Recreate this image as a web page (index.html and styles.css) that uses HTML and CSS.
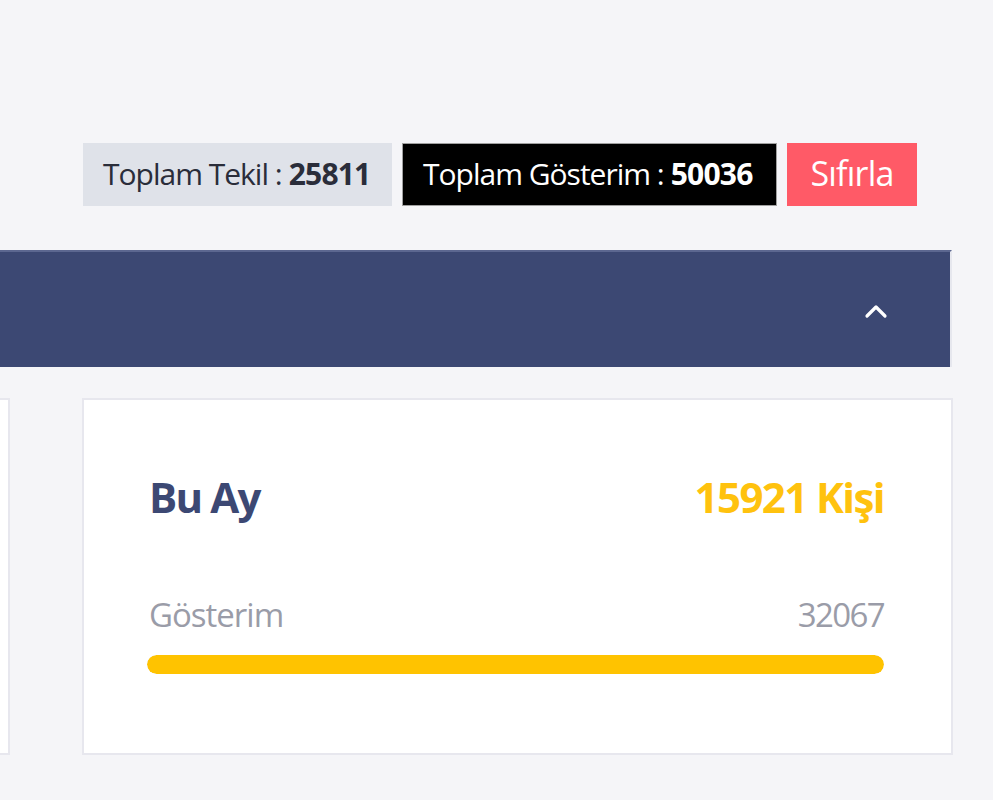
FILE: index.html
```html
<!DOCTYPE html>
<html lang="tr">
<head>
<meta charset="utf-8">
<title>İstatistik</title>
<link rel="stylesheet" href="styles.css">
</head>
<body>
<div class="page">
  <div class="badges">
    <div class="badge badge-light">Toplam Tekil : <b>25811</b></div>
    <div class="badge badge-dark">Toplam Gösterim : <b>50036</b></div>
    <div class="badge badge-reset">Sıfırla</div>
  </div>
  <div class="panel-bar">
    <svg class="chevron" width="24" height="16" viewBox="0 0 24 16"><path d="M3 13 L12 4 L21 13" fill="none" stroke="#fff" stroke-width="3.2" stroke-linecap="round" stroke-linejoin="round"/></svg>
  </div>
  <div class="cards">
    <div class="card card-edge"></div>
    <div class="card card-main">
      <div class="card-head">
        <span class="card-title">Bu Ay</span>
        <span class="card-count">15921 Kişi</span>
      </div>
      <div class="card-row">
        <span class="row-label">Gösterim</span>
        <span class="row-value">32067</span>
      </div>
      <div class="progress"><div class="progress-fill" style="width:100%"></div></div>
    </div>
  </div>
</div>
</body>
</html>
```

FILE: styles.css
```css
html, body {
  margin: 0;
  padding: 0;
  background: #f5f5f8;
  font-family: "Open Sans", "Noto Sans", sans-serif;
}
.page {
  padding-top: 143px;
  width: 993px;
  height: 800px;
  box-sizing: border-box;
  overflow: hidden;
}
.badges {
  display: flex;
  gap: 10px;
  margin-left: 83px;
  height: 63px;
}
.badge {
  display: flex;
  align-items: center;
  box-sizing: border-box;
  height: 63px;
  font-size: 30px;
  letter-spacing: -1px;
  padding: 0 20px 3px;
  white-space: nowrap;
}
.badge b { font-weight: 700; margin-left: 7px; letter-spacing: -0.8px; }
.badge-light {
  background: #dfe2e9;
  color: #2a2d3a;
  width: 309px;
}
.badge-dark {
  background: #000;
  color: #fff;
  border: 1px solid #a0a0a0;
  width: 375px;
}
.badge-reset {
  background: #ff5a67;
  color: #fff;
  width: 130px;
  justify-content: center;
  font-size: 34px;
  letter-spacing: -0.8px;
  padding: 0 0 4px;
}
.panel-bar {
  margin-top: 44px;
  width: 952px;
  height: 117px;
  box-sizing: border-box;
  background: #3c4873;
  border-top: 2px solid #5c6790;
  border-right: 2px solid #e6e7ee;
  display: flex;
  align-items: center;
  justify-content: flex-end;
  padding-right: 62px;
}
.chevron { display: block; margin-top: 2px; }
.cards {
  margin-top: 31px;
  display: flex;
  gap: 72px;
}
.card {
  background: #fff;
  border: 2px solid #e7e7ee;
  box-sizing: border-box;
  height: 357px;
}
.card-edge {
  flex: 0 0 10px;
  border-left: none;
}
.card-main {
  flex: 0 0 871px;
  padding: 67px 67px 0 65px;
}
.card-head {
  display: flex;
  justify-content: space-between;
  align-items: baseline;
  line-height: 60px;
}
.card-title {
  font-size: 42px;
  font-weight: 700;
  color: #3c4873;
  letter-spacing: -1.8px;
}
.card-count {
  font-size: 42px;
  font-weight: 700;
  color: #ffc20e;
  letter-spacing: -1.6px;
}
.card-row {
  display: flex;
  justify-content: space-between;
  margin-top: 68px;
  font-size: 33px;
  line-height: 40px;
  color: #9a9ca8;
  letter-spacing: -1px;
}
.row-value { letter-spacing: -1.6px; }
.progress {
  margin-top: 20px;
  height: 19px;
  border-radius: 10px;
  background: #eee;
  overflow: hidden;
  margin-left: -2px;
}
.progress-fill {
  height: 100%;
  background: #ffc300;
  border-radius: 10px;
}
```
